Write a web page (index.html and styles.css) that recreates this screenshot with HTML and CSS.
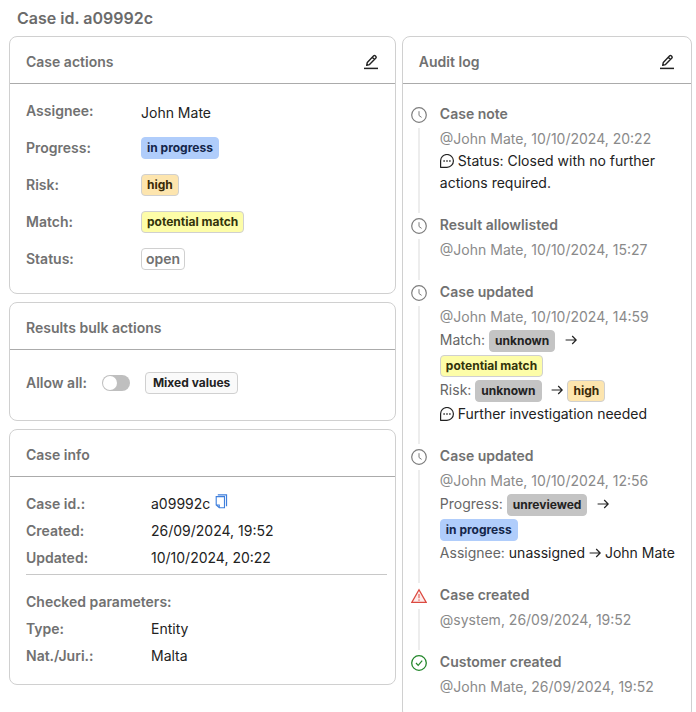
FILE: index.html
```html
<!DOCTYPE html>
<html lang="en">
<head>
    <meta charset="UTF-8">
    <meta name="viewport" content="width=device-width, initial-scale=1.0">
    <title>Case id. a09992c</title>
    <link rel="stylesheet" href="styles.css">
</head>
<body>
    <!-- shared icons -->
    <svg class="icon-defs" aria-hidden="true">
        <symbol id="icon-edit" viewBox="0 0 16 16">
            <path d="M1 14.4h14" stroke-width="1.5"/>
            <path d="M3.7 11.3l.6-2.9 6.4-6.6a1.1 1.1 0 0 1 1.5 0l.7.7a1.1 1.1 0 0 1 0 1.5l-6.4 6.6zM9.3 3.3l2.1 2.1" stroke-width="1.4" stroke-linejoin="round"/>
        </symbol>
        <symbol id="icon-clock" viewBox="0 0 16 16">
            <circle cx="8" cy="8" r="7.3" stroke-width="1.2"/>
            <path d="M8 4.2v4.3l2.6 1.9"/>
        </symbol>
        <symbol id="icon-comment" viewBox="0 0 14 14">
            <path d="M.6 13.3V7a6.4 6.4 0 1 1 6.4 6.3z" stroke-width="1.2" stroke-linejoin="round"/>
            <path d="M3.4 7h1.4M6.3 7h1.4M9.2 7h1.4" stroke-width="1.4"/>
        </symbol>
        <symbol id="icon-arrow" viewBox="0 0 12 14">
            <path d="M.6 7h10.6M7.2 3L11.2 7l-4 4" stroke-width="1.2"/>
        </symbol>
    </svg>

    <h1>Case id. a09992c</h1>
    <div class="container">
        <div class="column">
            <section class="card">
                <div class="card-header">
                    <h2>Case actions</h2>
                    <button type="button" class="icon-button" aria-label="Edit case"><svg class="icon"><use href="#icon-edit"/></svg></button>
                </div>
                <dl class="actions-list">
                    <dt>Assignee:</dt>
                    <dd class="assignee">John Mate</dd>
                    <dt>Progress:</dt>
                    <dd><span class="tag tag-progress">in progress</span></dd>
                    <dt>Risk:</dt>
                    <dd><span class="tag tag-high">high</span></dd>
                    <dt>Match:</dt>
                    <dd><span class="tag tag-match">potential match</span></dd>
                    <dt>Status:</dt>
                    <dd><span class="tag tag-open">open</span></dd>
                </dl>
            </section>

            <section class="card">
                <div class="card-header">
                    <h2>Results bulk actions</h2>
                </div>
                <div class="bulk-actions">
                    <label for="allowAll">Allow all:</label>
                    <input type="checkbox" id="allowAll" class="switch">
                    <span class="tag tag-mixed">Mixed values</span>
                </div>
            </section>

            <section class="card">
                <div class="card-header">
                    <h2>Case info</h2>
                </div>
                <div class="case-info">
                    <dl class="info-list">
                        <dt>Case id.:</dt>
                        <dd>a09992c <button type="button" class="copy-button" aria-label="Copy case id"><svg viewBox="0 0 14 16"><path d="M3 .8h9.4v12.4" stroke-width="1.3"/><path d="M1.3 2.8h8.9v12H4.6L1.3 11.7zM1.3 11.7h3.3v3.1" stroke-width="1.2"/></svg></button></dd>
                        <dt>Created:</dt>
                        <dd>26/09/2024, 19:52</dd>
                        <dt>Updated:</dt>
                        <dd>10/10/2024, 20:22</dd>
                    </dl>
                    <hr>
                    <h3>Checked parameters:</h3>
                    <dl class="info-list">
                        <dt>Type:</dt>
                        <dd>Entity</dd>
                        <dt>Nat./Juri.:</dt>
                        <dd>Malta</dd>
                    </dl>
                </div>
            </section>
        </div>

        <section class="card audit-log">
            <div class="card-header">
                <h2>Audit log</h2>
                <button type="button" class="icon-button" aria-label="Add note"><svg class="icon"><use href="#icon-edit"/></svg></button>
            </div>
            <ul class="timeline">
                <li>
                    <div class="marker"><svg class="icon"><use href="#icon-clock"/></svg></div>
                    <div class="event">
                        <h3>Case note</h3>
                        <p class="meta">@John Mate, 10/10/2024, 20:22</p>
                        <p class="note"><svg class="inline-icon"><use href="#icon-comment"/></svg> Status: Closed with no further actions required.</p>
                    </div>
                </li>
                <li>
                    <div class="marker"><svg class="icon"><use href="#icon-clock"/></svg></div>
                    <div class="event">
                        <h3>Result allowlisted</h3>
                        <p class="meta">@John Mate, 10/10/2024, 15:27</p>
                    </div>
                </li>
                <li>
                    <div class="marker"><svg class="icon"><use href="#icon-clock"/></svg></div>
                    <div class="event">
                        <h3>Case updated</h3>
                        <p class="meta">@John Mate, 10/10/2024, 14:59</p>
                        <p class="change">Match: <span class="tag tag-unknown">unknown</span> <svg class="inline-icon arrow"><use href="#icon-arrow"/></svg> <span class="tag tag-match">potential match</span></p>
                        <p class="change">Risk: <span class="tag tag-unknown">unknown</span> <svg class="inline-icon arrow"><use href="#icon-arrow"/></svg> <span class="tag tag-high">high</span></p>
                        <p class="note"><svg class="inline-icon"><use href="#icon-comment"/></svg> Further investigation needed</p>
                    </div>
                </li>
                <li>
                    <div class="marker"><svg class="icon"><use href="#icon-clock"/></svg></div>
                    <div class="event">
                        <h3>Case updated</h3>
                        <p class="meta">@John Mate, 10/10/2024, 12:56</p>
                        <p class="change">Progress: <span class="tag tag-unknown">unreviewed</span> <svg class="inline-icon arrow"><use href="#icon-arrow"/></svg> <span class="tag tag-progress">in progress</span></p>
                        <p class="note"><span class="field">Assignee:</span> unassigned <svg class="inline-icon arrow"><use href="#icon-arrow"/></svg> John Mate</p>
                    </div>
                </li>
                <li>
                    <div class="marker marker-alert"><svg class="icon" viewBox="0 0 16 16"><path d="M8 1.8L15.2 14.4H.8z" fill="#fdeceb" stroke-width="1.3"/><path d="M8 6v4.2M8 11.4v1.4"/></svg></div>
                    <div class="event">
                        <h3>Case created</h3>
                        <p class="meta">@system, 26/09/2024, 19:52</p>
                    </div>
                </li>
                <li>
                    <div class="marker marker-ok"><svg class="icon" viewBox="0 0 16 16"><circle cx="8" cy="8" r="7.3" stroke-width="1.3"/><path d="M5 8l2.2 2.4 4-4.8" stroke-width="1.2"/></svg></div>
                    <div class="event">
                        <h3>Customer created</h3>
                        <p class="meta">@John Mate, 26/09/2024, 19:52</p>
                    </div>
                </li>
            </ul>
        </section>
    </div>
</body>
</html>
```
FILE: styles.css
```css
* {
    box-sizing: border-box;
}

body {
    font-family: Inter, "Liberation Sans", sans-serif;
    font-size: 14px;
    line-height: 22px;
    margin: 0;
    padding: 0 4px 0 9px;
    background-color: #fff;
    color: #222;
}

h1, h2, h3, p, dl, dd, ul {
    margin: 0;
    padding: 0;
}

h1 {
    font-size: 16px;
    font-weight: 600;
    line-height: 36px;
    padding-left: 8px;
    color: #6b6b6b;
}

h2, h3, dt, label {
    font-size: 14px;
    font-weight: 600;
    color: #717171;
}

svg {
    fill: none;
    stroke: currentColor;
}

.icon-defs {
    display: none;
}

.icon {
    display: block;
    width: 16px;
    height: 16px;
}

.inline-icon {
    width: 14px;
    height: 14px;
    vertical-align: -2px;
    color: #222;
}

.inline-icon.arrow {
    width: 12px;
}

.container {
    display: grid;
    grid-template-columns: 4fr 3fr;
    gap: 6px;
}

.column {
    display: flex;
    flex-direction: column;
    gap: 8px;
}

.card {
    border: 1px solid #d0d0d0;
    border-radius: 8px;
}

.card-header {
    display: flex;
    align-items: center;
    justify-content: space-between;
    height: 47px;
    padding: 4px 16px 0;
    border-bottom: 1px solid #ababab;
}

.icon-button, .copy-button {
    padding: 0;
    border: none;
    background: none;
    cursor: pointer;
}

.icon-button {
    color: #222;
}

.copy-button {
    align-self: flex-start;
    color: #3f7fdc;
}

.copy-button svg {
    display: block;
    width: 13px;
    height: 15px;
    margin-top: 4px;
}

/* Case actions */
.actions-list {
    display: grid;
    grid-template-columns: 100px 1fr;
    row-gap: 15px;
    column-gap: 15px;
    padding: 16px 16px 23px;
}

.actions-list dd {
    display: flex;
    align-items: flex-end;
}

.actions-list .assignee {
    padding-top: 3px;
    height: 22px;
    align-items: center;
}

/* Results bulk actions */
.bulk-actions {
    display: flex;
    align-items: center;
    gap: 15px;
    padding: 22px 16px 26px;
}

.switch {
    appearance: none;
    width: 28px;
    height: 16px;
    margin: 0;
    padding: 1px;
    border-radius: 8px;
    background-color: #bfbfbf;
    cursor: pointer;
}

.switch::before {
    content: "";
    display: block;
    width: 14px;
    height: 14px;
    border-radius: 50%;
    background-color: #fff;
}

.switch:checked {
    background-color: #3f7fdc;
}

.switch:checked::before {
    margin-left: auto;
}

/* Case info */
.case-info {
    padding: 13px 8px 15px 16px;
    line-height: 27px;
}

.info-list {
    display: grid;
    grid-template-columns: 125px 1fr;
}

.info-list dd {
    display: flex;
    gap: 5px;
}

hr {
    margin: 3px 0 13px;
    border: none;
    border-top: 1px solid #c8c8c8;
}

/* Tags */
.tag {
    display: inline-block;
    padding: 0 5px;
    border: 1px solid #d0d0d0;
    border-radius: 4px;
    font-size: 12px;
    font-weight: 700;
    line-height: 20px;
    white-space: nowrap;
    color: #222;
}

.tag-progress {
    background-color: #b0cdfb;
    border-color: #b0cdfb;
    color: #14264a;
}

.tag-high {
    background-color: #fde5ae;
    color: #3a2a08;
}

.tag-match {
    background-color: #fdfda8;
    color: #33330a;
}

.tag-unknown {
    background-color: #c4c4c4;
    border-color: #c4c4c4;
    margin-right: 6px;
}

.tag-open {
    padding: 0 4px;
    font-size: 14px;
    font-weight: 600;
    color: #717171;
}

.tag-mixed {
    padding: 0 7px;
    background-color: #fafafa;
}

/* Audit log */
.timeline {
    list-style: none;
    padding: 19px 12px 0 8px;
}

.timeline li {
    display: flex;
    gap: 13px;
}

.marker {
    display: flex;
    flex-direction: column;
    align-items: center;
    gap: 5px;
    padding: 4px 0 1px;
    color: #7d7d7d;
}

.marker::after {
    content: "";
    flex: 1;
    width: 2px;
    background-color: #ededed;
}

.timeline li:last-child .marker::after {
    display: none;
}

.marker-alert {
    color: #dc4a41;
}

.marker-ok {
    color: #23862b;
}

.event {
    padding-bottom: 20px;
}

.event h3 {
    margin-bottom: 3px;
}

.meta {
    color: #8a8a8a;
}

.change {
    line-height: 25px;
    color: #666;
}

.meta + .change {
    margin-top: -1px;
}

.change + .note {
    margin-top: 1px;
}

.field {
    color: #666;
}
```
